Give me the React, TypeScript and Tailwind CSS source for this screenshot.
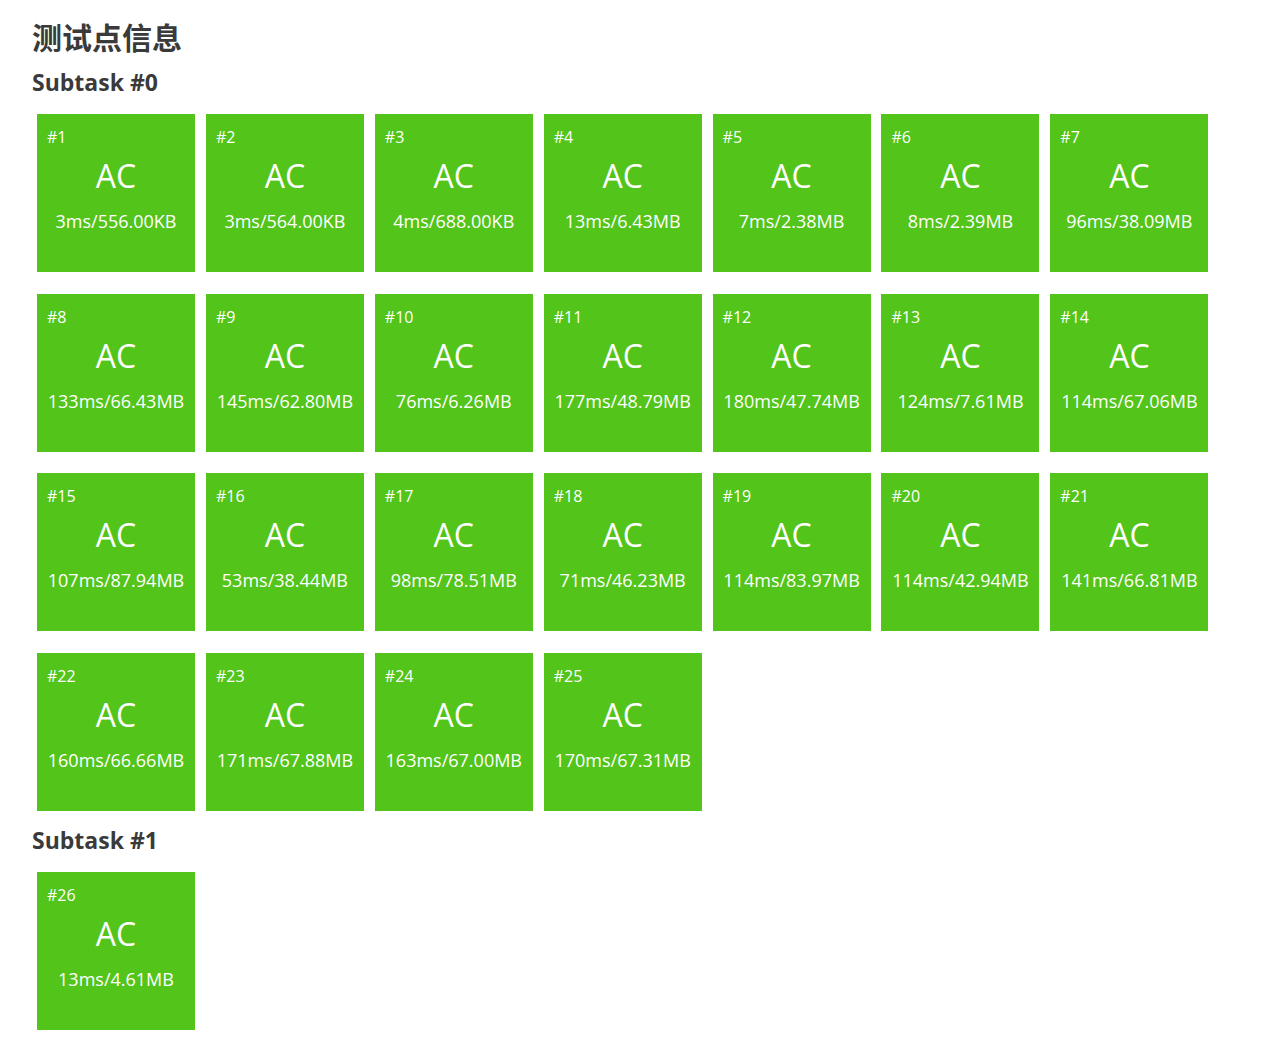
const subtasks: { name: string; cases: [number, string][] }[] = [
  {
    name: 'Subtask #0',
    cases: [
      [1, '3ms/556.00KB'],
      [2, '3ms/564.00KB'],
      [3, '4ms/688.00KB'],
      [4, '13ms/6.43MB'],
      [5, '7ms/2.38MB'],
      [6, '8ms/2.39MB'],
      [7, '96ms/38.09MB'],
      [8, '133ms/66.43MB'],
      [9, '145ms/62.80MB'],
      [10, '76ms/6.26MB'],
      [11, '177ms/48.79MB'],
      [12, '180ms/47.74MB'],
      [13, '124ms/7.61MB'],
      [14, '114ms/67.06MB'],
      [15, '107ms/87.94MB'],
      [16, '53ms/38.44MB'],
      [17, '98ms/78.51MB'],
      [18, '71ms/46.23MB'],
      [19, '114ms/83.97MB'],
      [20, '114ms/42.94MB'],
      [21, '141ms/66.81MB'],
      [22, '160ms/66.66MB'],
      [23, '171ms/67.88MB'],
      [24, '163ms/67.00MB'],
      [25, '170ms/67.31MB'],
    ],
  },
  {
    name: 'Subtask #1',
    cases: [[26, '13ms/4.61MB']],
  },
];

function CaseBox({ id, stat }: { id: number; stat: string }) {
  return (
    <div className="w-[158px] h-[158px] bg-[#52c41a] text-white">
      <div className="pt-[13px] pl-[10px] text-[16px] leading-[20px]">#{id}</div>
      <div className="mt-[9px] text-center text-[32px] leading-[40px]">AC</div>
      <div className="mt-[13px] text-center text-[18px] leading-[24px] whitespace-nowrap">{stat}</div>
    </div>
  );
}

export default function App() {
  return (
    <div
      className="px-[32px] pt-[18px] pb-[20px] text-[#3a3a3a] bg-white"
      style={{ fontFamily: '"Open Sans", "Noto Sans CJK SC", sans-serif' }}
    >
      <h2 className="text-[30px] leading-[40px] font-bold">测试点信息</h2>
      {subtasks.map((st) => (
        <div key={st.name}>
          <h3 className="mt-[9px] text-[23px] leading-[30px] font-bold">{st.name}</h3>
          <div className="mt-[17px] mb-[14px] pl-[5px] flex flex-wrap gap-x-[10.9px] gap-y-[21.7px] w-[1190px]">
            {st.cases.map(([id, stat]) => (
              <CaseBox key={id} id={id} stat={stat} />
            ))}
          </div>
        </div>
      ))}
    </div>
  );
}
